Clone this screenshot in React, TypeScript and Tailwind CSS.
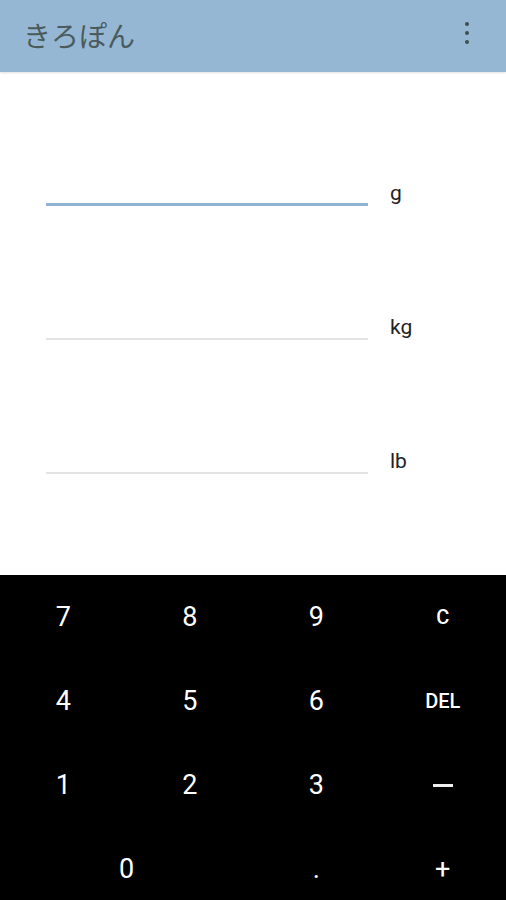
import React from "react";

const units = ["g", "kg", "lb"];

const keys: { label: string; span?: boolean; small?: boolean; dash?: boolean }[] = [
  { label: "7" }, { label: "8" }, { label: "9" }, { label: "C", small: true },
  { label: "4" }, { label: "5" }, { label: "6" }, { label: "DEL", small: true },
  { label: "1" }, { label: "2" }, { label: "3" }, { label: "−", dash: true },
  { label: "0", span: true }, { label: "." }, { label: "+" },
];

export default function App() {
  return (
    <div className="flex h-[900px] w-[506px] flex-col overflow-hidden bg-white font-['Roboto','Noto_Sans_CJK_JP',sans-serif]">
      <header className="flex h-[72px] shrink-0 items-center justify-between bg-[#95b7d3] pl-[23px] pr-[37px] shadow-[0_1px_2px_rgba(0,0,0,0.12)]">
        <h1 className="mb-[2px] font-['Noto_Sans_CJK_JP',sans-serif] text-[28px] leading-none text-[#4b5b5c]">きろぽん</h1>
        <div className="mb-[6px] flex flex-col items-center gap-[5px]">
          <span className="h-[4px] w-[4px] rounded-full bg-[#3f4f4f]" />
          <span className="h-[4px] w-[4px] rounded-full bg-[#3f4f4f]" />
          <span className="h-[4px] w-[4px] rounded-full bg-[#3f4f4f]" />
        </div>
      </header>

      <main className="flex h-[503px] shrink-0 flex-col gap-[86px] pl-[46px] pt-[86px]">
        {units.map((u, i) => (
          <div key={u} className="flex h-[48px] items-end gap-[22px]">
            <div
              className={`h-full w-[322px] ${i === 0 ? "border-b-[3px] border-[#92b3d2]" : "border-b-2 border-[#e4e4e4]"}`}
            />
            <span className="mb-[-1px] text-[21px] leading-[28px] text-[#222]">{u}</span>
          </div>
        ))}
      </main>

      <section className="grid h-[336px] shrink-0 grid-cols-4 grid-rows-4 bg-black text-white">
        {keys.map((k) => (
          <button
            key={k.label}
            aria-label={k.label}
            className={`flex items-center justify-center ${k.span ? "col-span-2" : ""} ${k.small ? "text-[20px] font-medium" : "text-[27px]"}`}
          >
            {k.dash ? <span className="h-[3px] w-[20px] bg-[#eee]" /> : k.label}
          </button>
        ))}
      </section>
    </div>
  );
}
